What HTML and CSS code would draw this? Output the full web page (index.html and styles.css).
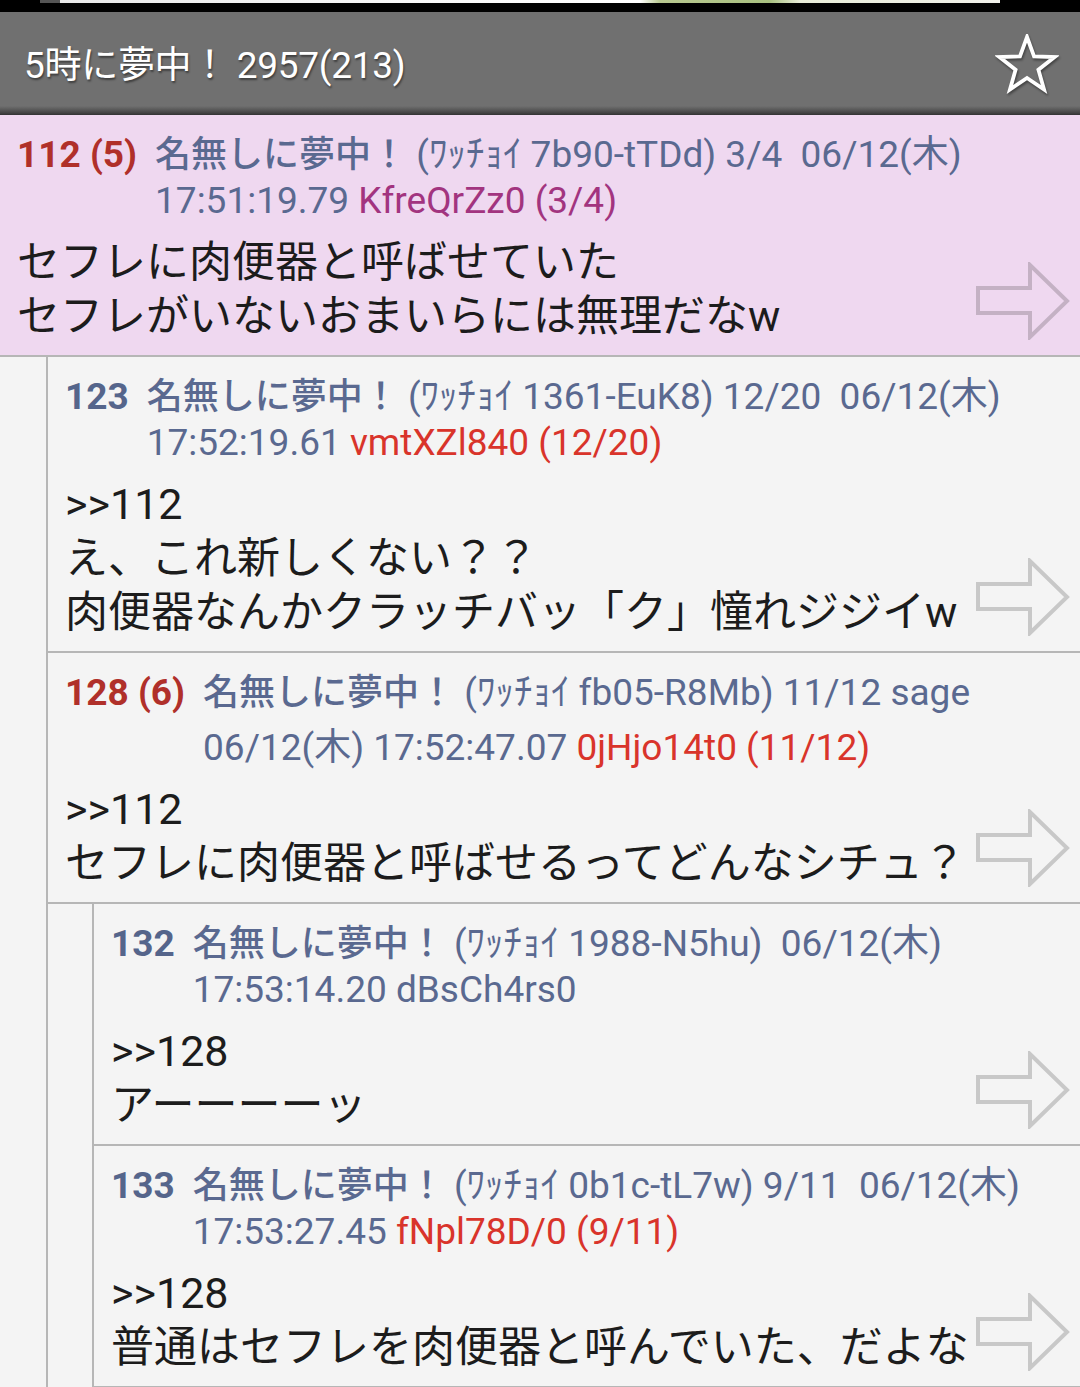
FILE: index.html
```html
<!DOCTYPE html>
<html lang="ja">
<head>
<meta charset="utf-8">
<title>5時に夢中！</title>
<link rel="stylesheet" href="styles.css">
</head>
<body>
<div class="statusbar"><div class="strip"></div></div>
<header class="appbar">
  <h1 class="title">5時に夢中！ 2957(213)</h1>
  <svg class="star" width="64" height="60" viewBox="0 0 64 60"><polygon points="32,3 39.05,22.29 59.58,23.04 43.41,35.71 49.05,55.46 32,44 14.95,55.46 20.59,35.71 4.42,23.04 24.95,22.29" fill="none" stroke="#fff" stroke-width="3.8" stroke-linejoin="miter"/></svg>
</header>

<main class="thread">
  <article class="post post-hl">
    <div class="head">
      <span class="num num-red">112 (5)</span>
      <div class="meta">
        <div class="mline"><span class="name">名無しに夢中！</span> (ﾜｯﾁｮｲ 7b90-tTDd) 3/4&nbsp; 06/12(木)</div>
        <div class="mline">17:51:19.79 <span class="id-purple">KfreQrZz0 (3/4)</span></div>
      </div>
    </div>
    <div class="body">セフレに肉便器と呼ばせていた<br>セフレがいないおまいらには無理だなw</div>
    <svg class="arrow" width="96" height="78" viewBox="0 0 96 78"><path d="M3,26 H55 V3 L92,39 L55,75 V51 H3 Z" fill="none" stroke="rgba(0,0,0,0.18)" stroke-width="4" stroke-linejoin="miter"/></svg>
  </article>

  <div class="nest">
    <article class="post">
      <div class="head">
        <span class="num">123</span>
        <div class="meta">
          <div class="mline"><span class="name">名無しに夢中！</span> (ﾜｯﾁｮｲ 1361-EuK8) 12/20&nbsp; 06/12(木)</div>
          <div class="mline">17:52:19.61 <span class="id-red">vmtXZl840 (12/20)</span></div>
        </div>
      </div>
      <div class="body">&gt;&gt;112<br>え、これ新しくない？？<br>肉便器なんかクラッチバッ「ク」憧れジジイw</div>
      <svg class="arrow" width="96" height="78" viewBox="0 0 96 78"><path d="M3,26 H55 V3 L92,39 L55,75 V51 H3 Z" fill="none" stroke="rgba(0,0,0,0.18)" stroke-width="4" stroke-linejoin="miter"/></svg>
    </article>

    <article class="post">
      <div class="head">
        <span class="num num-red">128 (6)</span>
        <div class="meta">
          <div class="mline"><span class="name">名無しに夢中！</span> (ﾜｯﾁｮｲ fb05-R8Mb) 11/12 sage</div>
          <div class="mline mline-wrap">06/12(木) 17:52:47.07 <span class="id-red">0jHjo14t0 (11/12)</span></div>
        </div>
      </div>
      <div class="body">&gt;&gt;112<br>セフレに肉便器と呼ばせるってどんなシチュ？</div>
      <svg class="arrow" width="96" height="78" viewBox="0 0 96 78"><path d="M3,26 H55 V3 L92,39 L55,75 V51 H3 Z" fill="none" stroke="rgba(0,0,0,0.18)" stroke-width="4" stroke-linejoin="miter"/></svg>
    </article>

    <div class="nest nest-inner">
      <article class="post">
        <div class="head">
          <span class="num">132</span>
          <div class="meta">
            <div class="mline"><span class="name">名無しに夢中！</span> (ﾜｯﾁｮｲ 1988-N5hu)&nbsp; 06/12(木)</div>
            <div class="mline">17:53:14.20 dBsCh4rs0</div>
          </div>
        </div>
        <div class="body">&gt;&gt;128<br>アーーーーッ</div>
        <svg class="arrow" width="96" height="78" viewBox="0 0 96 78"><path d="M3,26 H55 V3 L92,39 L55,75 V51 H3 Z" fill="none" stroke="rgba(0,0,0,0.18)" stroke-width="4" stroke-linejoin="miter"/></svg>
      </article>

      <article class="post">
        <div class="head">
          <span class="num">133</span>
          <div class="meta">
            <div class="mline"><span class="name">名無しに夢中！</span> (ﾜｯﾁｮｲ 0b1c-tL7w) 9/11&nbsp; 06/12(木)</div>
            <div class="mline">17:53:27.45 <span class="id-red">fNpl78D/0 (9/11)</span></div>
          </div>
        </div>
        <div class="body">&gt;&gt;128<br>普通はセフレを肉便器と呼んでいた、だよな</div>
        <svg class="arrow" width="96" height="78" viewBox="0 0 96 78"><path d="M3,26 H55 V3 L92,39 L55,75 V51 H3 Z" fill="none" stroke="rgba(0,0,0,0.18)" stroke-width="4" stroke-linejoin="miter"/></svg>
      </article>
    </div>
  </div>
</main>
</body>
</html>
```

FILE: styles.css
```css
* { box-sizing: border-box; }
html, body {
  margin: 0;
  padding: 0;
  background: #f4f4f4;
  font-family: Roboto, "Noto Sans CJK JP", sans-serif;
  width: 1080px;
  height: 1387px;
  overflow: hidden;
}
.statusbar {
  height: 12px;
  background: #000;
}
.strip {
  margin-left: 40px;
  width: 960px;
  height: 3px;
  background: linear-gradient(90deg, #555 0, #555 20px, #e8e8e8 20px, #f4f4f4 280px, #ffffff 600px, #b8c890 620px, #a8c080 730px, #e8ecd8 760px, #f0f0ea 960px);
}
.appbar {
  height: 103px;
  padding: 0 21px 7px 24px;
  display: flex;
  align-items: center;
  justify-content: space-between;
  background: linear-gradient(180deg, #707070 0, #707070 94px, #4a4a4a 100px, #333 103px);
}
.title {
  margin: 4px 0 0 0;
  font-weight: 400;
  font-size: 37px;
  color: #fff;
  letter-spacing: -0.3px;
  text-shadow: 1px 2px 2px rgba(0,0,0,0.45);
}
.star {
  margin-top: 8px;
  filter: drop-shadow(1px 2px 1px rgba(0,0,0,0.4));
}
.thread {
  display: flex;
  flex-direction: column;
}
.post {
  position: relative;
  padding: 17px 10px 12px 17px;
  border-bottom: 2px solid #b6b6b6;
}
.post-hl {
  background: #efd8f0;
}
.nest {
  margin-left: 46px;
  border-left: 2px solid #b6b6b6;
  display: flex;
  flex-direction: column;
}
.nest-inner {
  margin-left: 44px;
}
.head {
  display: flex;
  align-items: flex-start;
  gap: 18px;
  font-size: 37px;
  line-height: 46px;
  color: #5a6990;
}
.num {
  font-weight: 700;
  white-space: nowrap;
  color: #55658b;
}
.num-red {
  color: #b0302a;
}
.meta {
  flex: 1;
}
.mline {
  white-space: nowrap;
}
.mline-wrap {
  margin-top: 9px;
}
.name {
  font-size: 36px;
  font-weight: 500;
}
.id-purple {
  color: #a2347f;
}
.id-red {
  color: #d9342b;
}
.body {
  margin-top: 11px;
  font-size: 43px;
  line-height: 54px;
  color: #1c1c1c;
}
.arrow {
  position: absolute;
  right: 9px;
  bottom: 15px;
}
```
